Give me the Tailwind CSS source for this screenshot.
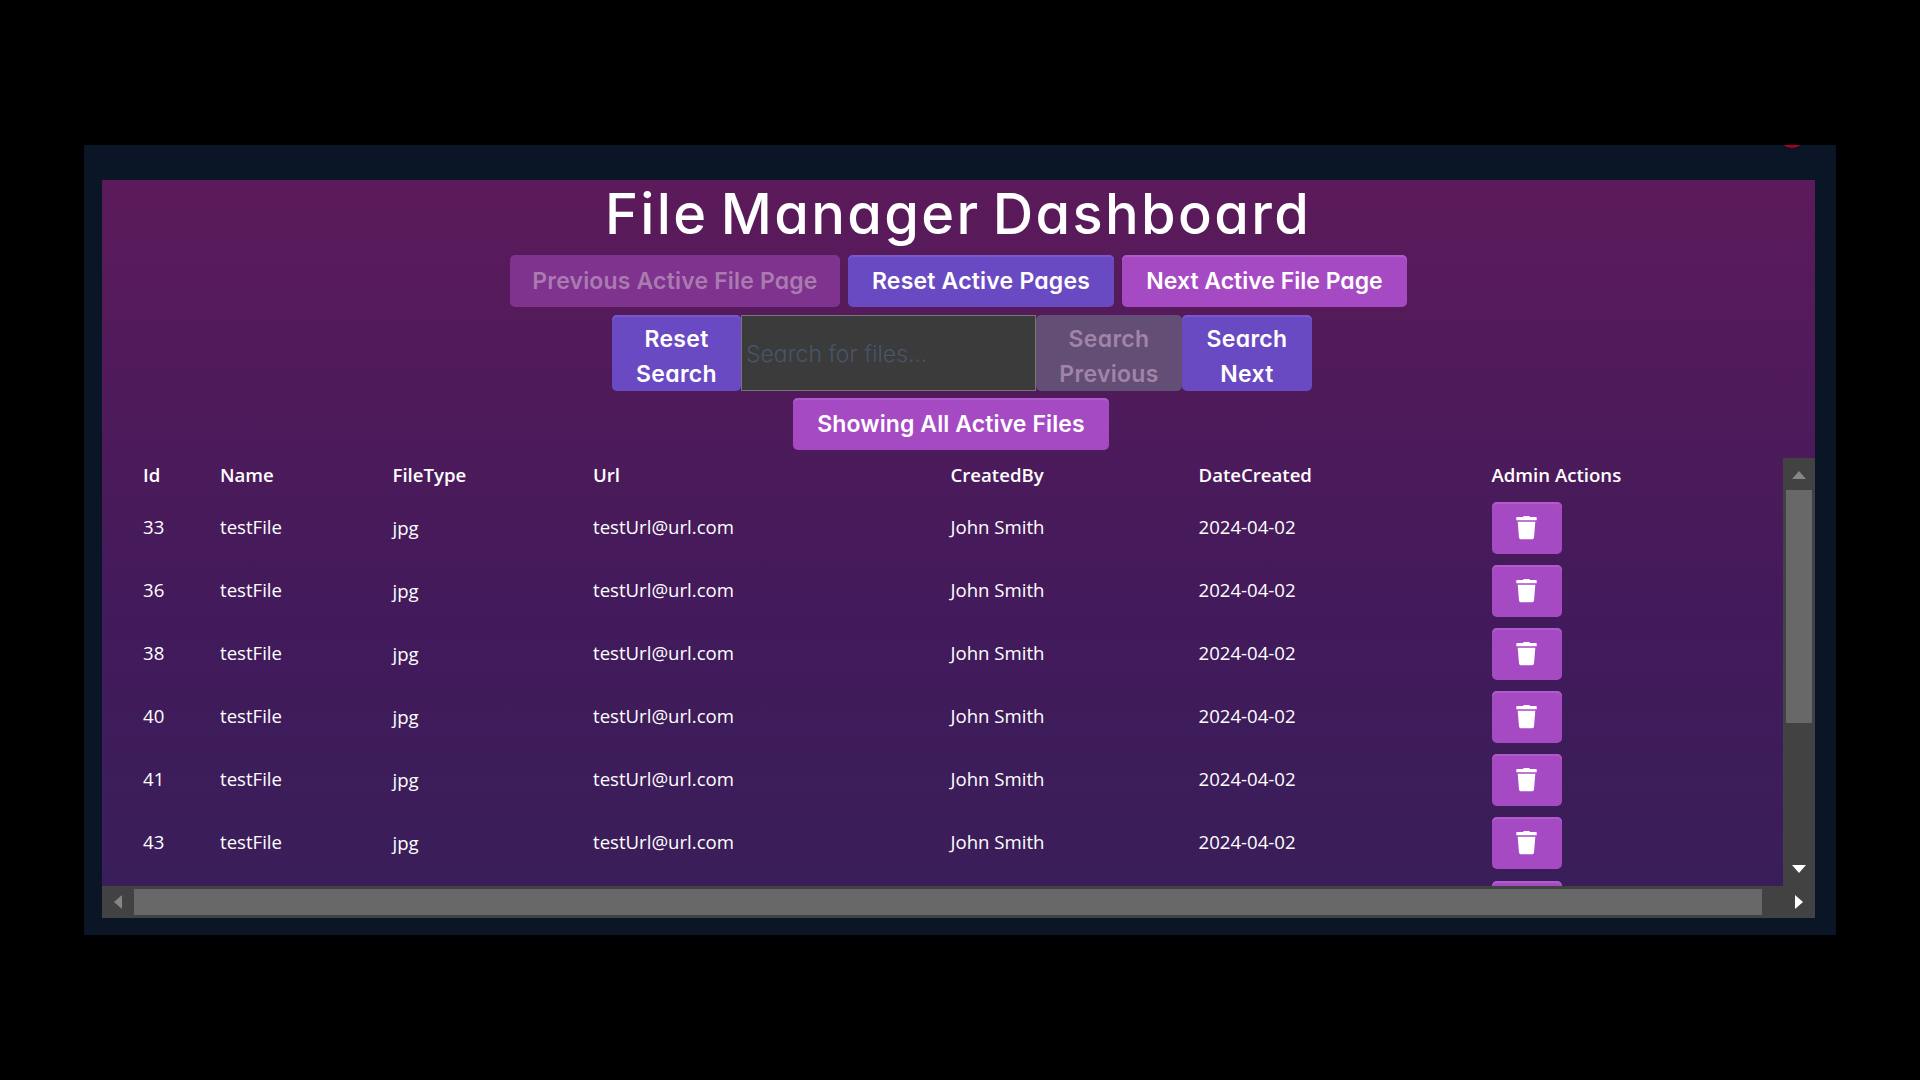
<!DOCTYPE html>
<html lang="en">
<head>
<meta charset="utf-8">
<title>File Manager Dashboard</title>
<script src="https://cdn.jsdelivr.net/npm/@tailwindcss/browser@4"></script>
</head>
<body class="bg-black text-white h-[1080px] overflow-hidden pt-[145px] pl-[84px]">
<svg class="hidden"><symbol id="trash" viewBox="0 0 21 24"><path fill="currentColor" d="M7 1Q7.300 0 8.300 0H12.700Q13.700 0 14 1H20Q20.700 1 20.700 1.700V4.200H0.300V1.700Q0.300 1 1 1ZM1.700 5.700H19.300L18 21.500Q17.800 23.300 16.300 23.300H4.700Q3.200 23.300 3 21.500Z"/></symbol></svg>

<div class="relative w-[1752px] h-[790px] bg-[#0a1625] overflow-hidden pt-[35px] pl-[18px]">
  <div class="absolute left-[1694px] top-[-25px] w-7 h-7 rounded-full bg-[#a50028]"></div>

  <main class="w-[1713px] h-[738px] flex flex-col bg-linear-to-b from-[#5c1a5a] via-[#421a5b] via-60% to-[#381e59] font-['Inter',sans-serif] [font-feature-settings:'cv11']">
    <h1 class="h-[75px] pl-[503px] text-[56px] leading-[68px] font-medium tracking-[2.35px] [word-spacing:-5px] whitespace-nowrap">File Manager Dashboard</h1>

    <div class="flex gap-2 pl-[408px] h-[52px] text-[23px] font-semibold text-center leading-[50px] whitespace-nowrap">
      <button class="w-[330px] rounded-[5px] bg-[#7f328e] text-[#a97bb0] tracking-[.17px]">Previous Active File Page</button>
      <button class="w-[266px] rounded-[5px] bg-[#6a4ac2] shadow-[inset_0_2px_0_#7858cc] tracking-[.2px]">Reset Active Pages</button>
      <button class="w-[285px] rounded-[5px] bg-[#a64ac4] shadow-[inset_0_2px_0_#b05acb]">Next Active File Page</button>
    </div>

    <div class="flex mt-[8px] pl-[510px] h-[76px] text-[23px] font-semibold text-center leading-[35px]">
      <button class="w-[129px] pt-[7px] rounded-[5px] bg-[#6a4ac2] shadow-[inset_0_2px_0_#7858cc] tracking-[.3px]">Reset<br>Search</button>
      <input type="text" placeholder="Search for files..." class="w-[295px] h-[76px] pl-[4px] pt-[2px] border border-[#767676] bg-[#3b3b3b] placeholder:text-[#475569] placeholder:opacity-100 font-light text-left">
      <button class="w-[146px] pt-[7px] rounded-[5px] bg-[#634e76] text-[#a184a7] tracking-[.3px]">Search<br>Previous</button>
      <button class="w-[130px] pt-[7px] rounded-[5px] bg-[#6a4ac2] shadow-[inset_0_2px_0_#7858cc] tracking-[.3px]">Search<br>Next</button>
    </div>

    <div class="flex mt-[7px] pl-[691px] h-[52px] text-[23px] font-semibold leading-[50px] whitespace-nowrap">
      <button class="w-[316px] rounded-[5px] bg-[#a64ac4] shadow-[inset_0_2px_0_#b05acb] tracking-[.1px]">Showing All Active Files</button>
    </div>

    <div class="flex mt-[8px] h-[428px]">
      <div id="table" class="w-[1681px] h-[428px] overflow-hidden font-['Open_Sans',sans-serif] text-[18.6px] pl-[41px] [font-feature-settings:normal]">
        <div class="grid grid-cols-[77px_172.5px_200.5px_357.500px_248px_293px_1fr] h-[34px] leading-[34px] font-semibold">
          <span>Id</span><span>Name</span><span>FileType</span><span>Url</span><span>CreatedBy</span><span>DateCreated</span><span>Admin Actions</span>
        </div>
      </div>
      <div class="w-8 h-[428px] bg-[#424242] flex flex-col items-center">
        <svg class="w-[14px] h-[8px] mt-[13px] mb-[11px]" viewBox="0 0 14 8"><path d="M7 0L14 8H0Z" fill="#868686"/></svg>
        <div class="w-[26px] h-[233px] bg-[#686868]"></div>
        <svg class="w-[14px] h-[8px] mt-auto mb-[13px]" viewBox="0 0 14 8"><path d="M7 8L14 0H0Z" fill="#fff"/></svg>
      </div>
    </div>

    <div class="flex items-center h-8 bg-[#424242]">
      <svg class="w-[8px] h-[14px] ml-[12px] mr-[12px]" viewBox="0 0 8 14"><path d="M0 7L8 0V14Z" fill="#868686"/></svg>
      <div class="w-[1628px] h-[26px] bg-[#686868]"></div>
      <svg class="w-[8px] h-[14px] ml-auto mr-[12px]" viewBox="0 0 8 14"><path d="M8 7L0 0V14Z" fill="#fff"/></svg>
    </div>
  </main>
</div>
<script>
  const table = document.getElementById('table');
  const trashButton = '<button class="col-start-7 w-[70px] h-[51.500px] rounded-[5px] bg-[#a64ac4] shadow-[inset_0_2px_0_#b05acb] flex justify-center pt-[13.500px] pr-px"><svg class="w-[21px] h-[24px]"><use href="#trash"/></svg></button>';
  for (const id of [33, 36, 38, 40, 41, 43, null]) {
    const cells = id === null ? '' : `<span>${id}</span><span>testFile</span><span class="pt-px">jpg</span><span>testUrl@url.com</span><span>John Smith</span><span>2024-04-02</span>`;
    table.insertAdjacentHTML('beforeend', `
      <div class="grid grid-cols-[77px_172.5px_200.5px_357.500px_248px_293px_1fr] h-[63.1px] pt-[10px] leading-[49.500px]">${cells}${trashButton}</div>`);
  }
</script>
</body>
</html>
